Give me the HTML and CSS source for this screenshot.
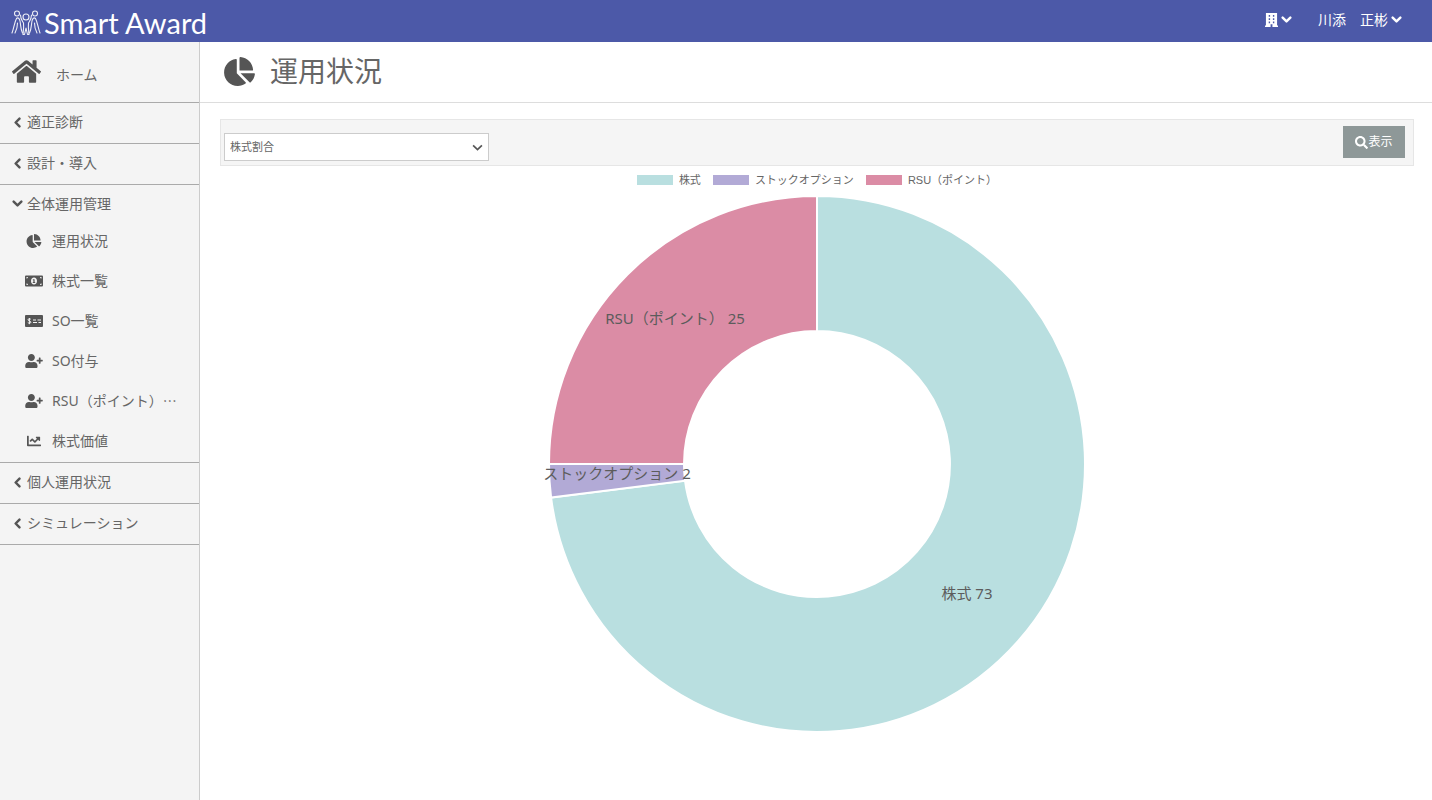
FILE: index.html
```html
<!DOCTYPE html>
<html lang="ja">
<head>
<meta charset="utf-8">
<title>運用状況 | Smart Award</title>
<link rel="stylesheet" href="styles.css">
</head>
<body>
<svg class="sprite" aria-hidden="true">
  <symbol id="chart-pie" viewBox="0 0 544 512"><path d="M527.79 288H290.5l158.03 158.03c6.04 6.04 15.98 6.53 22.19.68 38.7-36.46 65.32-85.61 73.13-140.86 1.34-9.46-6.51-17.85-16.06-17.85zm-15.83-64.8C503.72 103.74 408.26 8.28 288.8.04 279.68-.59 272 7.1 272 16.24V240h223.77c9.14 0 16.82-7.68 16.19-16.8zM224 288V50.71c0-9.55-8.39-17.4-17.84-16.06C86.99 51.49-4.1 155.6.14 280.37 4.5 408.51 114.83 513.59 243.03 511.98c50.4-.63 96.97-16.87 135.26-44.03 7.9-5.6 8.42-17.23 1.57-24.08L224 288z"/></symbol>
  <symbol id="user-plus" viewBox="0 0 640 512"><path d="M624 208h-64v-64c0-8.8-7.2-16-16-16h-32c-8.8 0-16 7.2-16 16v64h-64c-8.8 0-16 7.2-16 16v32c0 8.8 7.2 16 16 16h64v64c0 8.8 7.2 16 16 16h32c8.8 0 16-7.2 16-16v-64h64c8.8 0 16-7.2 16-16v-32c0-8.8-7.2-16-16-16zm-400 48c70.7 0 128-57.3 128-128S294.7 0 224 0 96 57.3 96 128s57.3 128 128 128zm89.6 32h-16.7c-22.2 10.2-46.9 16-72.9 16s-50.6-5.8-72.9-16h-16.7C60.2 288 0 348.2 0 422.4V464c0 26.5 21.5 48 48 48h352c26.5 0 48-21.5 48-48v-41.6c0-74.2-60.2-134.4-134.4-134.4z"/></symbol>
  <symbol id="chevron" viewBox="0 0 10 10"><path d="M1.500 3.200L5 6.700l3.500-3.500" fill="none" stroke="currentColor" stroke-width="2.200" stroke-linecap="round" stroke-linejoin="round"/></symbol>
</svg>

<header class="topbar">
  <a class="brand" href="#">
    <svg class="brand-mark" viewBox="0 0 30 26" aria-hidden="true">
      <g fill="none" stroke="currentColor" stroke-width="1.100" stroke-linecap="round" stroke-linejoin="round" opacity=".9">
        <circle cx="6" cy="3.500" r="2.500"/><circle cx="24" cy="3.500" r="2.500"/><circle cx="15" cy="7" r="3"/>
        <path d="M1 23C3 18 3.500 12 5.500 8.500c1.500-1.500 3 0 3.500 2.500.8 4 .5 8 2.500 12M6.500 13c0 4-.8 7-2.500 10"/>
        <path d="M29 23c-2-5-2.500-11-4.500-14.500-1.500-1.500-3 0-3.500 2.500-.8 4-.5 8-2.500 12M23.500 13c0 4 .8 7 2.500 10"/>
        <path d="M9.500 5c0 4 1.500 5.500 3 8 .5 4-.2 8-.5 11.500h1.500L15 18l1.500 6.500H18c-.3-3.500-1-7.500-.5-11.500 1.500-2.500 3-4 3-8"/>
      </g>
    </svg>
    <span>Smart Award</span>
  </a>
  <div class="account">
    <button class="top-button" type="button" aria-label="会社">
      <svg class="building" viewBox="0 0 14 15" aria-hidden="true"><path fill="currentColor" fill-rule="evenodd" d="M1 0h12v13.500h1V15H8v-3H6v3H0v-1.500h1zM4 2v2h1.500V2zm4.500 0v2H10V2zM4 5.500v2h1.500v-2zm4.500 0v2H10v-2zM4 9v2h1.500V9zm4.500 0v2H10V9z"/></svg>
      <svg class="caret" aria-hidden="true"><use href="#chevron"/></svg>
    </button>
    <button class="top-button" type="button">川添　正彬<svg class="caret" aria-hidden="true"><use href="#chevron"/></svg></button>
  </div>
</header>

<div class="layout">
  <nav class="sidebar" aria-label="メインメニュー">
    <a class="home" href="#">
      <svg class="home-icon" viewBox="0 30 576 452" aria-hidden="true"><path fill="currentColor" d="M280.370 148.260L96 300.110V464a16 16 0 0 0 16 16l112.060-.29a16 16 0 0 0 15.920-16V368a16 16 0 0 1 16-16h64a16 16 0 0 1 16 16v95.640a16 16 0 0 0 16 16.050L464 480a16 16 0 0 0 16-16V300L295.670 148.260a12.190 12.190 0 0 0-15.300 0zM571.600 251.470L488 182.560V44.050a12 12 0 0 0-12-12h-56a12 12 0 0 0-12 12v72.610L318.470 43a48 48 0 0 0-61 0L4.340 251.470a12 12 0 0 0-1.600 16.900l25.500 31A12 12 0 0 0 45.150 301l235.220-193.740a12.190 12.190 0 0 1 15.300 0L530.900 301a12 12 0 0 0 16.900-1.600l25.500-31a12 12 0 0 0-1.700-16.930z"/></svg>
      <span>ホーム</span>
    </a>
    <div class="group"><button class="group-toggle" type="button" aria-expanded="false"><svg class="caret closed" aria-hidden="true"><use href="#chevron"/></svg>適正診断</button></div>
    <div class="group"><button class="group-toggle" type="button" aria-expanded="false"><svg class="caret closed" aria-hidden="true"><use href="#chevron"/></svg>設計・導入</button></div>
    <div class="group">
      <button class="group-toggle open" type="button" aria-expanded="true"><svg class="caret" aria-hidden="true"><use href="#chevron"/></svg>全体運用管理</button>
      <ul class="submenu">
        <li><a href="#"><svg class="icon" aria-hidden="true"><use href="#chart-pie"/></svg>運用状況</a></li>
        <li><a href="#"><svg class="icon" viewBox="0 0 18 14" aria-hidden="true"><path fill="currentColor" fill-rule="evenodd" d="M1 1.500h16a1 1 0 0 1 1 1v9a1 1 0 0 1-1 1H1a1 1 0 0 1-1-1v-9a1 1 0 0 1 1-1zM9 3.500C7.300 3.500 6 5 6 7s1.300 3.500 3 3.500S12 9 12 7 10.700 3.500 9 3.500zM1.500 9.500V11H3c0-.9-.6-1.500-1.500-1.500zm15 0c-.9 0-1.500.6-1.500 1.500h1.500zM1.500 3v1.500C2.400 4.500 3 3.900 3 3zM15 3c0 .9.600 1.500 1.500 1.500V3zM8.300 5.200h1.300v2.900h.6v.9H7.800v-.9h.6V6.200h-.6v-.7z"/></svg>株式一覧</a></li>
        <li><a href="#"><svg class="icon" viewBox="0 0 18 14" aria-hidden="true"><rect y="1" width="18" height="12" rx="1" fill="currentColor"/><path d="M5.800 5.300C5.300 4.600 3 4.600 3 5.800S5.900 6.900 5.900 8.200 3.300 9.300 2.800 8.500M4.400 4v6.200M8 6h3M12.500 6H16M8 8.500h4M13.500 8.500H16" fill="none" stroke="#f4f4f4" stroke-width="1"/></svg>SO一覧</a></li>
        <li><a href="#"><svg class="icon" aria-hidden="true"><use href="#user-plus"/></svg>SO付与</a></li>
        <li><a href="#"><svg class="icon" aria-hidden="true"><use href="#user-plus"/></svg>RSU（ポイント）⋯</a></li>
        <li><a href="#"><svg class="icon" viewBox="0 0 512 512" aria-hidden="true"><path fill="currentColor" d="M496 384H64V80c0-8.840-7.160-16-16-16H16C7.160 64 0 71.160 0 80v336c0 17.670 14.330 32 32 32h464c8.840 0 16-7.160 16-16v-32c0-8.840-7.160-16-16-16zM464 96H345.940c-21.380 0-32.090 25.850-16.970 40.970l32.400 32.400L288 242.750l-73.370-73.370c-12.500-12.500-32.760-12.500-45.250 0l-68.690 68.690c-6.250 6.250-6.250 16.380 0 22.630l22.620 22.620c6.250 6.250 16.380 6.250 22.630 0L192 237.250l73.370 73.370c12.500 12.500 32.760 12.500 45.250 0l96-96 32.400 32.400c15.120 15.120 40.970 4.410 40.970-16.970V112c.01-8.840-7.150-16-15.990-16z"/></svg>株式価値</a></li>
      </ul>
    </div>
    <div class="group"><button class="group-toggle" type="button" aria-expanded="false"><svg class="caret closed" aria-hidden="true"><use href="#chevron"/></svg>個人運用状況</button></div>
    <div class="group"><button class="group-toggle" type="button" aria-expanded="false"><svg class="caret closed" aria-hidden="true"><use href="#chevron"/></svg>シミュレーション</button></div>
  </nav>

  <main class="content">
    <div class="page-title">
      <svg class="title-icon" aria-hidden="true"><use href="#chart-pie"/></svg>
      <h1>運用状況</h1>
    </div>
    <div class="page-body">
      <form class="filter">
        <div class="select-box">
          <select aria-label="表示内容"><option>株式割合</option></select>
          <svg class="select-caret" viewBox="0 0 10 10" aria-hidden="true"><path d="M1 3l4 4 4-4" fill="none" stroke="currentColor" stroke-width="1.500"/></svg>
        </div>
        <button class="show" type="button"><svg viewBox="0 0 512 512" aria-hidden="true"><path fill="currentColor" d="M505 442.700L405.300 343c-4.500-4.500-10.600-7-17-7H372c27.600-35.300 44-79.700 44-128C416 93.100 322.900 0 208 0S0 93.100 0 208s93.100 208 208 208c48.300 0 92.700-16.400 128-44v16.300c0 6.400 2.500 12.500 7 17l99.700 99.700c9.400 9.400 24.600 9.400 33.900 0l28.300-28.300c9.400-9.400 9.400-24.600.1-34zM208 336c-70.700 0-128-57.200-128-128 0-70.700 57.200-128 128-128 70.700 0 128 57.200 128 128 0 70.700-57.200 128-128 128z"/></svg>表示</button>
      </form>
      <ul class="legend">
        <li><span class="swatch stock"></span>株式</li>
        <li><span class="swatch option"></span>ストックオプション</li>
        <li><span class="swatch rsu"></span>RSU（ポイント）</li>
      </ul>
      <svg class="donut" viewBox="-280 -268 560 536" role="img" aria-label="株式割合">
        <path class="slice stock" d="M0-268A268 268 0 1 1-265.900 33.600L-132 16.700A133 133 0 1 0 0-133Z"/>
        <path class="slice option" d="M-265.900 33.600A268 268 0 0 1-268 0H-133A133 133 0 0 0-132 16.700Z"/>
        <path class="slice rsu" d="M-268 0A268 268 0 0 1 0-268V-133A133 133 0 0 0-133 0Z"/>
        <text x="150" y="135">株式 73</text>
        <text x="-200" y="15">ストックオプション 2</text>
        <text x="-142" y="-140">RSU（ポイント） 25</text>
      </svg>
    </div>
  </main>
</div>
</body>
</html>
```

FILE: styles.css
```css
* { box-sizing: border-box; }

body {
  margin: 0;
  min-height: 100vh;
  display: flex;
  flex-direction: column;
  background: #fff;
  color: #666;
  font: 14px/20px "Noto Sans", "Noto Sans CJK JP", sans-serif;
}

a { color: inherit; text-decoration: none; }
button, select { font: inherit; color: inherit; border: 0; margin: 0; }
button { background: none; padding: 0; cursor: pointer; }
ul { list-style: none; margin: 0; padding: 0; }
svg { flex: none; fill: currentColor; color: #555; }
.topbar svg, .show svg { color: #fff; }
.sprite { display: none; }

.topbar {
  display: flex;
  justify-content: space-between;
  align-items: center;
  height: 42px;
  padding: 0 30px 0 11px;
  background: #4c59a8;
  color: #fff;
}
.brand {
  display: flex;
  align-items: center;
  gap: 3px;
  padding-top: 3px;
  font: 400 29px/36px Lato, sans-serif;
}
.brand-mark { width: 30px; height: 26px; }
.account { display: flex; gap: 26px; padding-bottom: 3px; }
.top-button { display: flex; align-items: center; gap: 3px; }
.building { width: 13px; height: 14px; }
.caret { width: 11px; height: 11px; }
.closed { transform: rotate(90deg); }

.layout { display: flex; flex: 1; }

.sidebar {
  flex: none;
  width: 200px;
  background: #f4f4f4;
  border-right: 1px solid #ccc;
}
.home {
  display: flex;
  align-items: center;
  gap: 15px;
  height: 61px;
  padding: 0 0 2px 12px;
  border-bottom: 1px solid #aaa;
}
.home-icon { width: 29px; height: 23px; }
.home span { padding-top: 8px; }
.group { border-bottom: 1px solid #aaa; }
.group-toggle {
  display: flex;
  align-items: center;
  gap: 4px;
  width: 100%;
  height: 40px;
  padding: 0 0 2px 12px;
}
.group-toggle.open { height: 37px; padding-bottom: 0; }
.submenu { padding-bottom: 1px; }
.submenu a {
  display: flex;
  align-items: center;
  gap: 9px;
  height: 40px;
  padding: 0 0 2px 25px;
  white-space: nowrap;
}
.submenu { padding-bottom: 0; }
.icon { width: 18px; height: 14px; }

.content { flex: 1; min-width: 0; }
.page-title {
  display: flex;
  align-items: center;
  gap: 15px;
  height: 61px;
  padding: 0 24px 2px;
  border-bottom: 1px solid #ddd;
}
.title-icon { width: 31px; height: 29px; }
h1 { margin: 0; font-size: 28px; line-height: 40px; font-weight: 400; }

.page-body { padding: 16px 18px 0 20px; }
.filter {
  display: flex;
  justify-content: space-between;
  align-items: flex-start;
  padding: 6px 8px 4px 3px;
  background: #f5f5f5;
  border: 1px solid #e6e6e6;
}
.select-box { position: relative; width: 265px; margin-top: 7px; }
.select-box select {
  appearance: none;
  display: block;
  width: 100%;
  height: 28px;
  padding: 0 24px 0 5px;
  background: #fff;
  border: 1px solid #ccc;
  border-radius: 0;
  font-size: 11px;
}
.select-caret { position: absolute; right: 6px; top: 9px; width: 11px; height: 11px; pointer-events: none; }
.show {
  display: flex;
  align-items: center;
  justify-content: center;
  width: 62px;
  height: 32px;
  background: #8e9898;
  color: #fff;
  font-size: 12px;
}
.show svg { width: 13px; height: 13px; }

.legend {
  display: flex;
  justify-content: center;
  gap: 12px;
  padding: 4px 0 6px;
  font: 11px/20px "Liberation Sans", "Noto Sans CJK JP", sans-serif;
}
.legend li { display: flex; align-items: center; gap: 6px; }
.swatch { width: 36px; height: 10px; }
.swatch.stock { background: #b9dfe0; }
.swatch.option { background: #b2aad6; }
.swatch.rsu { background: #db8ca5; }

.donut { display: block; width: 100%; max-width: 560px; margin: 0 auto; overflow: visible; }
.slice { stroke: #fff; stroke-width: 2px; }
.slice.stock { fill: #b9dfe0; }
.slice.option { fill: #b2aad6; }
.slice.rsu { fill: #db8ca5; }
.donut text { fill: #5c5c5c; font-size: 15px; text-anchor: middle; }
```
